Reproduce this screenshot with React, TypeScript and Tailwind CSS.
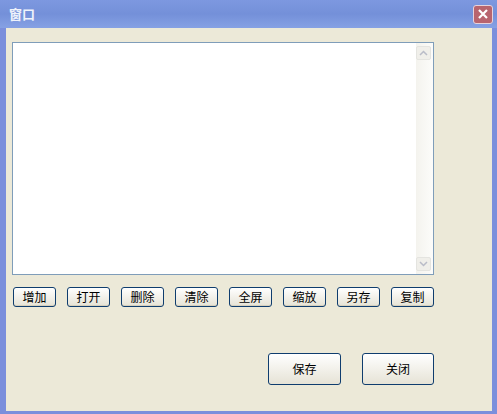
import React from "react";

const btn =
  "h-[20px] w-[43px] rounded-[3px] border border-[#0f3d6e] bg-gradient-to-b from-white to-[#e6e3d6] text-[12px] leading-none text-black shadow-[inset_0_-1px_0_#d6d0bd]";

function Chevron({ up }: { up?: boolean }) {
  return (
    <svg width="9" height="6" viewBox="0 0 9 6">
      <path
        d={up ? "M1 5 L4.5 1.5 L8 5" : "M1 1 L4.5 4.5 L8 1"}
        fill="none"
        stroke="#b9bcc8"
        strokeWidth="1.5"
      />
    </svg>
  );
}

export default function App() {
  const tools = ["增加", "打开", "删除", "清除", "全屏", "缩放", "另存", "复制"];
  return (
    <div
      className="flex h-[414px] w-[497px] flex-col bg-[#7b8fdc]"
      style={{ fontFamily: '"Noto Sans CJK SC", "Liberation Sans", sans-serif' }}
    >
      {/* title bar */}
      <div className="flex h-[28px] items-center justify-between bg-gradient-to-b from-[#7d98e0] via-[#7490d9] to-[#86a1e4] pl-[9px] pr-[4px]">
        <span className="text-[13px] font-bold text-[#eef2fb]">窗口</span>
        <button className="flex h-[19px] w-[20px] items-center justify-center rounded-[3px] border border-[#e6d3dc] bg-[#b8646e]">
          <svg width="12" height="12" viewBox="0 0 12 12">
            <path d="M2 2 L10 10 M10 2 L2 10" stroke="white" strokeWidth="2.2" />
          </svg>
        </button>
      </div>

      {/* body */}
      <div className="ml-[6px] mr-[5px] mb-[3px] flex flex-1 flex-col bg-[#ece9d8] pl-[6px] pt-[14px]">
        <div className="flex h-[233px] w-[422px] border border-[#7f9db9] bg-white">
          <div className="flex-1" />
          <div className="flex w-[17px] flex-col justify-between bg-gradient-to-r from-[#f4f3ee] to-[#fcfcfa] py-[3px] pr-[1px]">
            <div className="flex h-[14px] w-[15px] items-center justify-center rounded-[2px] border border-[#e4e4e0] bg-[#f0efea]">
              <Chevron up />
            </div>
            <div className="flex h-[14px] w-[15px] items-center justify-center rounded-[2px] border border-[#e4e4e0] bg-[#f0efea]">
              <Chevron />
            </div>
          </div>
        </div>

        <div className="mt-[12px] ml-[1px] flex gap-[11px]">
          {tools.map((t) => (
            <button key={t} className={btn}>
              {t}
            </button>
          ))}
        </div>

        <div className="mt-[46px] ml-[256px] flex gap-[21px]">
          <button className="h-[32px] w-[73px] rounded-[3px] border border-[#0f3d6e] bg-gradient-to-b from-white to-[#e6e3d6] text-[12px] text-black">
            保存
          </button>
          <button className="h-[32px] w-[72px] rounded-[3px] border border-[#0f3d6e] bg-gradient-to-b from-white to-[#e6e3d6] text-[12px] text-black">
            关闭
          </button>
        </div>
      </div>
    </div>
  );
}
